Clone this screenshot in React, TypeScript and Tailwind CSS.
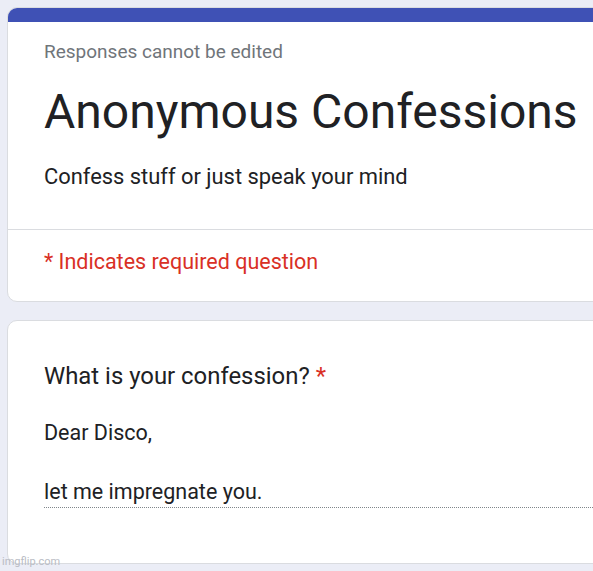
export default function App() {
  return (
    <div
      className="relative h-[571px] w-[593px] overflow-hidden bg-[#ebedf6] text-[#202124]"
      style={{ fontFamily: "Roboto, 'Noto Sans', sans-serif" }}
    >
      <div className="flex w-[640px] flex-col gap-[18px] pl-[7px] pt-[7px]">
        {/* header card */}
        <div className="overflow-hidden rounded-[10px] border border-[#dadce0] bg-white">
          <div className="h-[14px] bg-[#3f51b5]" />
          <div className="px-[36px] pb-[37px] pt-[17px]">
            <div className="text-[19px] leading-[26px] text-[#70757a]">Responses cannot be edited</div>
            <h1 className="mt-[19px] text-[48px] leading-[56px]">Anonymous Confessions</h1>
            <p className="mt-[22px] text-[21.9px] leading-[30px]">Confess stuff or just speak your mind</p>
          </div>
          <div className="border-t border-[#dadce0] px-[36px] pb-[24px] pt-[17px] text-[21.5px] leading-[30px] text-[#d93025]">
            * Indicates required question
          </div>
        </div>

        {/* question card */}
        <div className="rounded-[10px] border border-[#dadce0] bg-white px-[36px] pb-[55px] pt-[39px]">
          <div className="text-[23.9px] leading-[32px]">
            What is your confession? <span className="text-[#d93025]">*</span>
          </div>
          <div className="mt-[26px] border-b border-dotted border-[#80868b] text-[21.5px] leading-[30px]">
            <div>Dear Disco,</div>
            <div className="h-[29px]" />
            <div>let me impregnate you.</div>
          </div>
        </div>
      </div>

      <span className="absolute bottom-[1px] left-[2px] text-[11px] text-[#b9bcc4]">imgflip.com</span>
    </div>
  );
}
